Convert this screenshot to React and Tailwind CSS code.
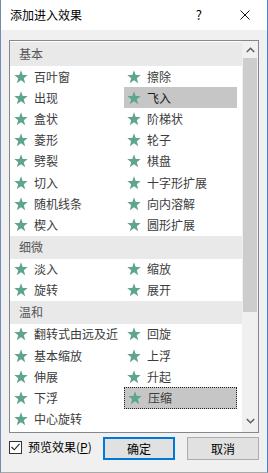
const font = { fontFamily: '"Noto Sans CJK SC", "Noto Sans", sans-serif' };

const groups = [
  {
    title: '基本',
    first: true,
    rows: [
      ['百叶窗', '擦除'],
      ['出现', '飞入', 'hover'],
      ['盒状', '阶梯状'],
      ['菱形', '轮子'],
      ['劈裂', '棋盘'],
      ['切入', '十字形扩展'],
      ['随机线条', '向内溶解'],
      ['楔入', '圆形扩展'],
    ],
  },
  {
    title: '细微',
    rows: [
      ['淡入', '缩放'],
      ['旋转', '展开'],
    ],
  },
  {
    title: '温和',
    rows: [
      ['翻转式由远及近', '回旋'],
      ['基本缩放', '上浮'],
      ['伸展', '升起'],
      ['下浮', '压缩', 'selected'],
      ['中心旋转', null],
    ],
  },
];

const Star = () => (
  <svg width="14" height="14" viewBox="0 0 14 14" className="shrink-0">
    <polygon
      points="7,0.3 8.7,5 13.7,5.1 9.8,8.2 11.2,13.2 7,10.3 2.8,13.2 4.2,8.2 0.3,5.1 5.3,5"
      fill="#5fa48d"
    />
  </svg>
);

const Cell = ({ label, state, right }) => {
  if (!label) return <div />;
  let cls = 'flex items-center gap-[6px] h-full ';
  cls += right ? 'pl-[3px] ' : 'pl-[4px] ';
  if (state === 'hover') cls += 'bg-[#c6c6c6] text-[#1a1a1a]';
  if (state === 'selected') cls += 'bg-[#c6c6c6] border border-dotted border-[#222] pl-[2px]';
  return (
    <div className={cls}>
      <Star />
      <span className="text-[12px] leading-none whitespace-nowrap">{label}</span>
    </div>
  );
};

export default function App() {
  return (
    <div
      className="w-[268px] h-[473px] flex flex-col bg-[#f0f0f0] border-l border-l-[#6d8cb0] border-r border-r-[#3d86d6] border-b border-b-[#a9a9a9] overflow-hidden text-[#3c3c3c]"
      style={font}
    >
      {/* title bar */}
      <div className="h-[30px] bg-white flex items-center shrink-0">
        <span className="pl-[9px] text-[12px] text-black">添加进入效果</span>
        <span className="ml-auto mr-[38px] text-[13px] text-black">?</span>
        <svg width="10" height="10" viewBox="0 0 10 10" className="mr-[17px]">
          <path d="M0.5 0.5 L9.5 9.5 M9.5 0.5 L0.5 9.5" stroke="#111" strokeWidth="1" />
        </svg>
      </div>

      <div className="px-[8px] pt-[10px] flex flex-col">
        {/* effect list */}
        <div className="h-[393px] bg-white border border-[#828790] flex overflow-hidden">
          <div className="flex-1 flex flex-col">
            {groups.map((g) => (
              <div key={g.title} className="flex flex-col">
                <div
                  className={
                    g.first
                      ? 'mt-[1px] h-[24px] bg-[#e9e9e9] flex items-center pl-[9px] text-[12px] text-[#555]'
                      : 'h-[23px] bg-[#e9e9e9] flex items-center pl-[9px] text-[12px] text-[#555]'
                  }
                >
                  {g.title}
                </div>
                {g.rows.map((r, i) => (
                  <div key={i} className="h-[21.2px] grid grid-cols-[114px_113px] shrink-0">
                    <Cell label={r[0]} />
                    <Cell label={r[1]} state={r[2]} right />
                  </div>
                ))}
              </div>
            ))}
          </div>
          {/* scrollbar */}
          <div className="w-[16px] bg-[#f0f0f0] flex flex-col shrink-0">
            <div className="h-[17px] flex items-center justify-center">
              <svg width="9" height="6" viewBox="0 0 9 6">
                <path d="M0.8 5 L4.5 1.3 L8.2 5" stroke="#606060" strokeWidth="1.6" fill="none" />
              </svg>
            </div>
            <div className="mx-[1px] h-[254px] bg-[#cdcdcd]" />
            <div className="flex-1" />
            <div className="h-[17px] flex items-center justify-center mb-[3px]">
              <svg width="9" height="6" viewBox="0 0 9 6">
                <path d="M0.8 1 L4.5 4.7 L8.2 1" stroke="#606060" strokeWidth="1.6" fill="none" />
              </svg>
            </div>
          </div>
        </div>

        {/* footer */}
        <div className="mt-[4px] flex items-start">
          <div className="flex items-center mt-[1px]">
            <div className="w-[13px] h-[13px] border border-[#333] bg-white flex items-center justify-center">
              <svg width="9" height="8" viewBox="0 0 9 8">
                <path d="M0.5 4 L3.3 6.8 L8.5 0.8" stroke="#222" strokeWidth="1.1" fill="none" />
              </svg>
            </div>
            <span className="ml-[6px] text-[12px] text-black">
              预览效果(<span className="underline">P</span>)
            </span>
          </div>
          <button className="ml-auto w-[72px] h-[23px] border-2 border-[#0078d7] bg-[#e1e1e1] text-[12px] text-black">
            确定
          </button>
          <button className="ml-[12px] w-[72px] h-[23px] border border-[#adadad] bg-[#e1e1e1] text-[12px] text-black">
            取消
          </button>
        </div>
      </div>
    </div>
  );
}
